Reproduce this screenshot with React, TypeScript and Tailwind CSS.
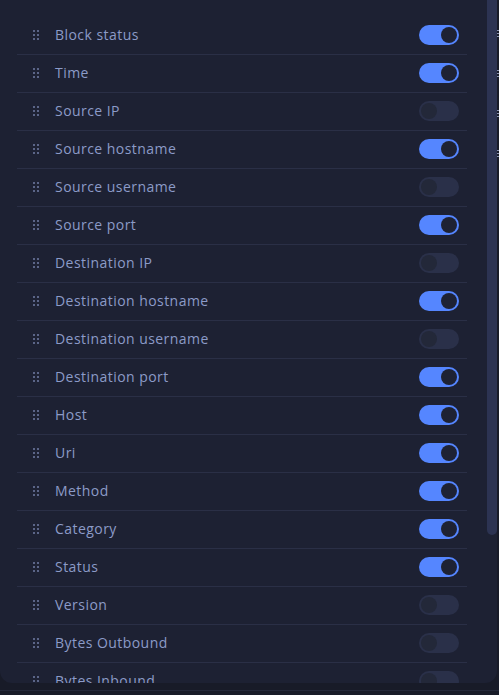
import React from "react";

const rows: [string, boolean][] = [
  ["Block status", true],
  ["Time", true],
  ["Source IP", false],
  ["Source hostname", true],
  ["Source username", false],
  ["Source port", true],
  ["Destination IP", false],
  ["Destination hostname", true],
  ["Destination username", false],
  ["Destination port", true],
  ["Host", true],
  ["Uri", true],
  ["Method", true],
  ["Category", true],
  ["Status", true],
  ["Version", false],
  ["Bytes Outbound", false],
  ["Bytes Inbound", false],
];

function Handle() {
  return (
    <div className="grid grid-cols-2 gap-x-[2px] gap-y-[2px] w-[6px] shrink-0">
      {Array.from({ length: 6 }).map((_, i) => (
        <div key={i} className="w-[2px] h-[2px] bg-[#5b6588]" />
      ))}
    </div>
  );
}

function Toggle({ on }: { on: boolean }) {
  return on ? (
    <div className="w-10 h-5 rounded-full bg-[#5586ff] flex items-center justify-end pr-[2px] shrink-0">
      <div className="w-4 h-4 rounded-full bg-[#1e2234]" />
    </div>
  ) : (
    <div className="w-10 h-5 rounded-full bg-[#2a3049] flex items-center justify-start pl-[2px] shrink-0">
      <div className="w-4 h-4 rounded-full bg-[#232839]" />
    </div>
  );
}

export default function App() {
  return (
    <div
      className="w-[499px] h-[695px] bg-[#181b28] overflow-hidden flex flex-col"
      style={{ fontFamily: '"Open Sans", "Noto Sans", sans-serif' }}
    >
      <div className="flex h-[683px] shrink-0">
        <div className="w-[497px] h-[683px] rounded-b-xl bg-[#1d2133] overflow-hidden flex shrink-0">
          <div className="flex-1 pt-[17px] pl-[17px] pr-[20px] overflow-hidden">
            {rows.map(([label, on]) => (
              <div
                key={label}
                className="h-[38px] border-b border-[#2a2f46] flex items-center pl-4 pr-2 pb-px"
              >
                <Handle />
                <span className="ml-4 mb-[2px] flex-1 text-[14px] text-[#8c9bc8] tracking-[0.45px]">
                  {label}
                </span>
                <Toggle on={on} />
              </div>
            ))}
          </div>
          <div className="w-[10px] shrink-0">
            <div className="h-[535px] w-full bg-[#2c3352] rounded-b-md" />
          </div>
        </div>
        <div className="flex-1 flex flex-col pt-[30px] gap-[33px] items-start">
          {[0, 1, 2, 3].map((i) => (
            <div key={i} className="flex flex-col gap-[2px]">
              <div className="w-[2px] h-[1px] bg-[#8a93b0]" />
              <div className="w-[2px] h-[1px] bg-[#8a93b0]" />
              <div className="w-[2px] h-[1px] bg-[#8a93b0]" />
            </div>
          ))}
        </div>
      </div>
      <div className="h-[12px] flex flex-col">
        <div className="h-[7px]" />
        <div className="h-px bg-[#242839]" />
      </div>
    </div>
  );
}
